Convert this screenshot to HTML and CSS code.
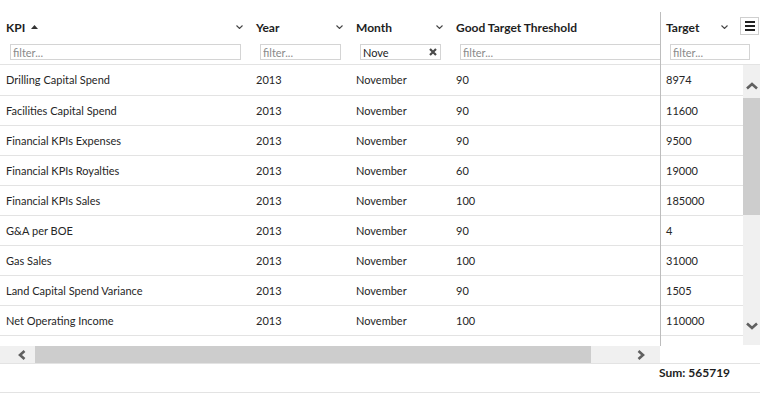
FILE: index.html
```html
<!DOCTYPE html>
<html>
	<head>
		<title>KPI targets</title>
		<link rel="stylesheet" href="styles.css">
	</head>
	<body>
		<div id="grid">
			<div class="main">
				<div class="head">
					<div class="hcell c-kpi">
						<div class="title">KPI <svg class="sort" width="7" height="4" viewBox="0 0 7 4"><polygon points="0,4 3.5,0 7,4" fill="#333"/></svg>
							<svg class="chev" width="7" height="4" viewBox="0 0 7 4"><polyline points="0.5,0.5 3.5,3.5 6.5,0.5" fill="none" stroke="#444" stroke-width="1.1"/></svg></div>
						<input class="filter" type="text" placeholder="filter...">
					</div>
					<div class="hcell c-year">
						<div class="title">Year
							<svg class="chev" width="7" height="4" viewBox="0 0 7 4"><polyline points="0.5,0.5 3.5,3.5 6.5,0.5" fill="none" stroke="#444" stroke-width="1.1"/></svg></div>
						<input class="filter" type="text" placeholder="filter...">
					</div>
					<div class="hcell c-month">
						<div class="title">Month
							<svg class="chev" width="7" height="4" viewBox="0 0 7 4"><polyline points="0.5,0.5 3.5,3.5 6.5,0.5" fill="none" stroke="#444" stroke-width="1.1"/></svg></div>
						<div class="filterbox">
							<input class="filter" type="text" value="Nove">
							<svg class="clear" width="8" height="8" viewBox="0 0 8 8"><path d="M1,1 L7,7 M7,1 L1,7" stroke="#4a4a4a" stroke-width="2.2"/></svg>
						</div>
					</div>
					<div class="hcell c-good">
						<div class="title">Good Target Threshold
							<svg class="chev" width="7" height="4" viewBox="0 0 7 4"><polyline points="0.5,0.5 3.5,3.5 6.5,0.5" fill="none" stroke="#444" stroke-width="1.1"/></svg></div>
						<input class="filter" type="text" placeholder="filter...">
					</div>
				</div>
				<div class="rows">
					<div class="row"><div class="c-kpi">Drilling Capital Spend</div><div class="c-year">2013</div><div class="c-month">November</div><div class="c-good">90</div></div>
					<div class="row"><div class="c-kpi">Facilities Capital Spend</div><div class="c-year">2013</div><div class="c-month">November</div><div class="c-good">90</div></div>
					<div class="row"><div class="c-kpi">Financial KPIs Expenses</div><div class="c-year">2013</div><div class="c-month">November</div><div class="c-good">90</div></div>
					<div class="row"><div class="c-kpi">Financial KPIs Royalties</div><div class="c-year">2013</div><div class="c-month">November</div><div class="c-good">60</div></div>
					<div class="row"><div class="c-kpi">Financial KPIs Sales</div><div class="c-year">2013</div><div class="c-month">November</div><div class="c-good">100</div></div>
					<div class="row"><div class="c-kpi">G&amp;A per BOE</div><div class="c-year">2013</div><div class="c-month">November</div><div class="c-good">90</div></div>
					<div class="row"><div class="c-kpi">Gas Sales</div><div class="c-year">2013</div><div class="c-month">November</div><div class="c-good">100</div></div>
					<div class="row"><div class="c-kpi">Land Capital Spend Variance</div><div class="c-year">2013</div><div class="c-month">November</div><div class="c-good">90</div></div>
					<div class="row"><div class="c-kpi">Net Operating Income</div><div class="c-year">2013</div><div class="c-month">November</div><div class="c-good">100</div></div>
				</div>
				<div class="hscroll">
					<div class="arrow"><svg width="8" height="10" viewBox="0 0 8 10"><polyline points="6.5,1 2,5 6.5,9" fill="none" stroke="#606060" stroke-width="2.6"/></svg></div>
					<div class="thumb"></div>
					<div class="track"></div>
					<div class="arrow"><svg width="8" height="10" viewBox="0 0 8 10"><polyline points="1.5,1 6,5 1.5,9" fill="none" stroke="#606060" stroke-width="2.6"/></svg></div>
				</div>
			</div>
			<div class="pinned">
				<div class="head">
					<div class="hcell c-target">
						<div class="title">Target
							<svg class="chev" width="7" height="4" viewBox="0 0 7 4"><polyline points="0.5,0.5 3.5,3.5 6.5,0.5" fill="none" stroke="#444" stroke-width="1.1"/></svg></div>
						<input class="filter" type="text" placeholder="filter...">
					</div>
					<div class="menu"><span></span><span></span><span></span></div>
				</div>
				<div class="pbody">
					<div class="rows">
						<div class="row">8974</div>
						<div class="row">11600</div>
						<div class="row">9500</div>
						<div class="row">19000</div>
						<div class="row">185000</div>
						<div class="row">4</div>
						<div class="row">31000</div>
						<div class="row">1505</div>
						<div class="row">110000</div>
					</div>
					<div class="vscroll">
						<div class="arrow up"><svg width="12" height="8" viewBox="0 0 12 8"><polyline points="1,6.5 6,2 11,6.5" fill="none" stroke="#606060" stroke-width="2.6"/></svg></div>
						<div class="thumb"></div>
						<div class="track"></div>
						<div class="arrow down"><svg width="12" height="8" viewBox="0 0 12 8"><polyline points="1,1.5 6,6 11,1.5" fill="none" stroke="#606060" stroke-width="2.6"/></svg></div>
					</div>
				</div>
			</div>
		</div>
		<div class="footer">
			<div class="spacer"></div>
			<div class="sum">Sum: 565719</div>
		</div>
	</body>
</html>
```

FILE: styles.css
```css
body {margin:0;padding-top:12px;font-family:"Lato","Liberation Sans",sans-serif;font-size:12px;color:#262626;background:#fff;}
#grid {display:flex;align-items:flex-start;width:760px;}
.main {width:660px;overflow:hidden;flex:none;}
.pinned {width:99px;flex:none;border-left:1px solid #bdbdbd;}

.head {display:flex;height:52px;border-bottom:1px solid #e3e3e3;position:relative;}
.main .head {width:810px;}
.hcell {flex:none;display:flex;flex-direction:column;}
.title {display:flex;align-items:center;height:16px;margin-top:7px;padding:0 7px 0 6px;font-weight:bold;color:#1e1e1e;white-space:nowrap;}
.title .sort {margin-left:6px;}
.title .chev {margin-left:auto;}
.filter {box-sizing:border-box;height:16px;margin:9px 0 0 10px;width:calc(100% - 19px);border:1px solid #d4d4d4;padding:0 2px;font:11px "Lato","Liberation Sans",sans-serif;color:#222;outline:none;}
.filter::placeholder {color:#8a8a8a;}
.filterbox {position:relative;}
.filterbox .clear {position:absolute;left:79px;top:13px;}

.c-kpi {width:250px;}
.c-year {width:100px;}
.c-month {width:100px;}
.c-good {width:360px;}
.c-target {width:99px;}
.c-target .title {padding-left:5px;padding-right:32px;}
.c-target .filter {margin-left:9px;width:80px;}

.menu {position:absolute;left:79px;top:5px;width:17px;height:16px;border:1px solid #cfcfcf;background:#fff;display:flex;flex-direction:column;justify-content:center;align-items:center;gap:2px;}
.menu span {display:block;width:10px;height:2px;background:#222;}

.rows {padding-bottom:10px;font-size:11px;}
.row {display:flex;height:29px;line-height:29px;border-bottom:1px solid #e3e3e3;white-space:nowrap;}
.row:first-child {height:30px;}
.row > div {flex:none;padding-left:6px;box-sizing:border-box;}
.pinned .row {padding-left:5px;}

.pbody {display:flex;}
.pbody .rows {width:82px;}
.vscroll {width:17px;height:280px;background:#f0f0f0;display:flex;flex-direction:column;}
.vscroll .arrow {display:flex;justify-content:center;align-items:center;}
.vscroll .up {height:33px;padding-top:8px;box-sizing:border-box;}
.vscroll .thumb {height:117px;background:#cdcdcd;}
.vscroll .track {flex:1;}
.vscroll .down {height:40px;padding-top:2px;box-sizing:border-box;}

.hscroll {display:flex;height:17px;width:660px;background:#f0f0f0;}
.hscroll .arrow {width:35px;display:flex;justify-content:center;align-items:center;padding-left:8px;box-sizing:border-box;}
.hscroll .arrow:last-child {padding-left:0;padding-right:4px;}
.hscroll .thumb {width:556px;background:#cdcdcd;}
.hscroll .track {flex:1;}

.footer {display:flex;width:760px;height:28px;border-top:1px solid #e3e3e3;border-bottom:1px solid #e3e3e3;}
.footer .spacer {width:659px;}
.footer .sum {font-weight:bold;color:#1e1e1e;line-height:18px;}
```
